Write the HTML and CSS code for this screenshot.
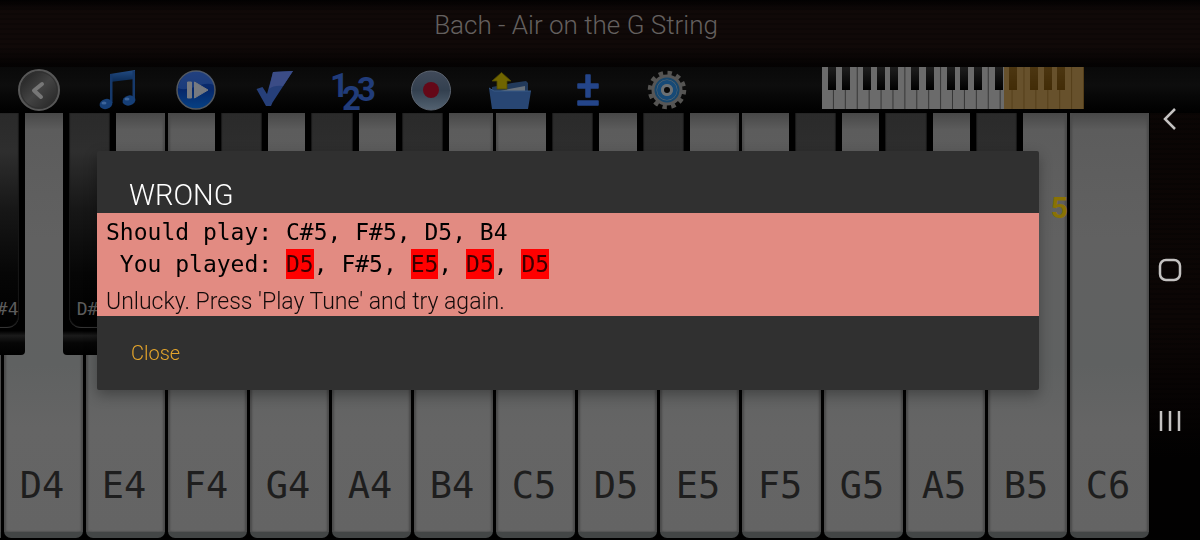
FILE: index.html
```html
<!DOCTYPE html>
<html lang="en">
<head>
<meta charset="utf-8">
<meta name="viewport" content="width=device-width, initial-scale=1">
<title>Bach - Air on the G String</title>
<link rel="stylesheet" href="styles.css">
</head>
<body>
<header class="title-bar"><h1 class="tune">Bach - Air on the G String</h1></header>

<div class="toolbar">
  <div class="tools">
    <button class="tool" aria-label="Back">
      <svg width="44" height="44" viewBox="0 0 44 44">
        <defs><linearGradient id="steel" x1="0" y1="0" x2="1" y2="1"><stop offset="0" stop-color="#1c1c1c"/><stop offset=".5" stop-color="#434343"/><stop offset="1" stop-color="#202020"/></linearGradient></defs>
        <circle cx="22" cy="22" r="20" fill="url(#steel)" stroke="#575757" stroke-width="2"/>
        <circle cx="22" cy="22" r="18" fill="none" stroke="#303030"/>
        <path d="M25 16l-8 6.500 7 6.500" fill="none" stroke="#777" stroke-width="4" stroke-linejoin="round" stroke-linecap="round"/>
      </svg>
    </button>
    <button class="tool" aria-label="Play tune">
      <svg width="44" height="44" viewBox="0 0 44 44">
        <defs><linearGradient id="note" x1="0" y1="0" x2="0" y2="1"><stop offset="0" stop-color="#234c83"/><stop offset="1" stop-color="#0b2a54"/></linearGradient></defs>
        <path d="M14 6l25-4v9l-25 3z" fill="url(#note)"/>
        <path d="M14 6h2.500v29H14zM36.500 3H39v28h-2.500z" fill="#16396b"/>
        <ellipse cx="10" cy="36" rx="6.500" ry="5" transform="rotate(-15 10 36)" fill="#163f77"/>
        <ellipse cx="33" cy="32.500" rx="6.500" ry="5" transform="rotate(-15 33 32.500)" fill="#163f77"/>
        <ellipse cx="8" cy="35" rx="2.500" ry="1.500" fill="#3d659b"/><ellipse cx="31" cy="31" rx="2.500" ry="1.500" fill="#3d659b"/>
      </svg>
    </button>
    <button class="tool" aria-label="Step">
      <svg width="44" height="44" viewBox="0 0 44 44">
        <defs><linearGradient id="blue" x1="0" y1="0" x2="0" y2="1"><stop offset="0" stop-color="#122f70"/><stop offset=".5" stop-color="#06286b"/><stop offset="1" stop-color="#064184"/></linearGradient></defs>
        <circle cx="22" cy="22" r="19" fill="url(#blue)" stroke="#53585f" stroke-width="1.500"/>
        <path d="M4 20C8-2 37-2 40 17 28 12 16 25 4 20z" fill="#42629a" opacity=".35"/>
        <path d="M13.500 14h4v16h-4zM20.500 14v16L34 22z" fill="#777a80" stroke="#777a80" stroke-linejoin="round"/>
      </svg>
    </button>
    <button class="tool" aria-label="Check">
      <svg width="44" height="44" viewBox="0 0 44 44">
        <path d="M3.500 21l6-2 4.500 7L20 4l20-1-20.500 31.500L18 38h-5z" fill="#263f79"/>
        <path d="M20 4l20-1-10 15q-9-1-14 3z" fill="#3b4c86"/>
      </svg>
    </button>
    <button class="tool" aria-label="Note numbers">
      <svg class="digits" width="44" height="44" viewBox="0 0 44 44">
        <text x="-1" y="29">1</text><text x="11" y="42">2</text><text x="26" y="33">3</text>
      </svg>
    </button>
    <button class="tool" aria-label="Record">
      <svg width="44" height="44" viewBox="0 0 44 44">
        <defs><linearGradient id="disc" x1="0" y1="0" x2="0" y2="1"><stop offset="0" stop-color="#414a5a"/><stop offset=".5" stop-color="#33404f"/><stop offset="1" stop-color="#536271"/></linearGradient></defs>
        <circle cx="22" cy="22.500" r="19.500" fill="url(#disc)" stroke="#5c6470"/>
        <circle cx="22" cy="22" r="8" fill="#640818"/>
      </svg>
    </button>
    <button class="tool" aria-label="Open file">
      <svg width="44" height="44" viewBox="0 0 44 44">
        <path d="M24 15l14-2 2 2v20H4V19z" fill="#223a5b"/>
        <path d="M21 21l16-3v6H8z" fill="#68717b"/>
        <path d="M1 20l5 3h37l-3 18H4z" fill="#284673"/>
        <path d="M1 20l5 3h37" fill="none" stroke="#375885"/>
        <path d="M13.500 4.500L23 13h-4v8H9v-8H4z" fill="#706500" stroke="#514900" stroke-width=".8"/>
      </svg>
    </button>
    <button class="tool" aria-label="Transpose">
      <svg width="44" height="44" viewBox="0 0 44 44">
        <path d="M20 7h4v9h8v4h-8v9h-4v-9h-8v-4h8zM12 33h20v4H12z" fill="#24458a" stroke="#24458a" stroke-width="1.500" stroke-linejoin="round"/>
      </svg>
    </button>
    <button class="tool" aria-label="Settings">
      <svg width="44" height="44" viewBox="0 0 44 44">
        <circle cx="22" cy="22" r="17" fill="none" stroke="#555452" stroke-width="4.500" stroke-dasharray="4.400 4.501"/>
        <circle cx="22" cy="22" r="15.500" fill="#565656"/>
        <circle cx="22" cy="22" r="11.500" fill="#5e686f" stroke="#17466c" stroke-width="2"/>
        <circle cx="22" cy="22" r="8" fill="none" stroke="#174a77" stroke-width="4"/>
        <circle cx="22" cy="22" r="6" fill="#6b7074"/>
        <circle cx="22" cy="22" r="3" fill="#080808"/>
      </svg>
    </button>
  </div>
  <svg class="overview" width="262" height="42" viewBox="0 0 262 42" role="img" aria-label="Keyboard range">
    <defs>
      <pattern id="whites" width="11.91" height="42" patternUnits="userSpaceOnUse"><rect width="11.91" height="42" fill="#6b6b6b"/><path d="M11.400 0v42" stroke="#343434"/></pattern>
      <linearGradient id="ebony" x1="0" y1="0" x2="0" y2="1"><stop offset="0" stop-color="#1e1e1e"/><stop offset="1" stop-color="#000"/></linearGradient>
    </defs>
    <rect width="262" height="42" fill="url(#whites)"/>
    <g fill="url(#ebony)"><rect x="6" width="8" height="23"/><rect x="20" width="8" height="23"/><rect x="41" width="8" height="23"/><rect x="55" width="8" height="23"/><rect x="68" width="8" height="23"/><rect x="89" width="8" height="23"/><rect x="104" width="8" height="23"/><rect x="125" width="8" height="23"/><rect x="138" width="8" height="23"/><rect x="152" width="8" height="23"/><rect x="173" width="8" height="23"/><rect x="187" width="8" height="23"/><rect x="208" width="8" height="23"/><rect x="222" width="8" height="23"/><rect x="235" width="8" height="23"/></g>
    <rect x="182" width="80" height="42" fill="#66430a" opacity=".65"/>
  </svg>
</div>

<main class="keyboard">
  <div class="cell sliver"><div class="white"></div><div class="black"><span class="face">C#4</span></div></div>
  <div class="cell"><div class="white">D4</div><div class="black at-d"><span class="face">D#</span></div></div>
  <div class="cell"><div class="white">E4</div></div>
  <div class="cell"><div class="white">F4</div><div class="black at-f"><span class="face"></span></div></div>
  <div class="cell"><div class="white">G4</div><div class="black at-g"><span class="face"></span></div></div>
  <div class="cell"><div class="white">A4</div><div class="black at-a"><span class="face"></span></div></div>
  <div class="cell"><div class="white">B4</div></div>
  <div class="cell"><div class="white">C5</div><div class="black at-c"><span class="face"></span></div></div>
  <div class="cell"><div class="white">D5</div><div class="black at-d"><span class="face"></span></div></div>
  <div class="cell"><div class="white">E5</div></div>
  <div class="cell"><div class="white">F5</div><div class="black at-f"><span class="face"></span></div></div>
  <div class="cell"><div class="white">G5</div><div class="black at-g"><span class="face"></span></div></div>
  <div class="cell"><div class="white">A5</div><div class="black at-a"><span class="face"></span></div></div>
  <div class="cell"><div class="white">B5</div><span class="octave">5</span></div>
  <div class="cell"><div class="white">C6</div></div>
</main>

<div class="overlay">
  <section class="dialog" role="dialog" aria-labelledby="result">
    <h2 class="result" id="result">WRONG</h2>
    <div class="report">
      <p class="notes">Should play: C#5, F#5, D5, B4</p>
      <p class="notes"> You played: <mark>D5</mark>, F#5, <mark>E5</mark>, <mark>D5</mark>, <mark>D5</mark></p>
      <p class="hint">Unlucky. Press 'Play Tune' and try again.</p>
    </div>
    <button class="close">Close</button>
  </section>
</div>

<nav class="system" aria-label="System">
  <button aria-label="Back"><svg width="24" height="24" viewBox="0 0 24 24"><path d="M17 2L7 12l10 10"/></svg></button>
  <button aria-label="Home"><svg width="24" height="24" viewBox="0 0 24 24"><rect x="2" y="2" width="20" height="20" rx="6"/></svg></button>
  <button aria-label="Recent apps"><svg width="24" height="24" viewBox="0 0 24 24"><path d="M3 2v20M12 2v20M21 2v20"/></svg></button>
</nav>
</body>
</html>
```

FILE: styles.css
```css
* { box-sizing: border-box; }

body {
  margin: 0;
  min-height: 100vh;
  display: flex;
  flex-direction: column;
  overflow: hidden;
  font-family: Roboto, "Open Sans", sans-serif;
  font-weight: 300;
  background:
    repeating-linear-gradient(180deg, #0000 0 3px, #00000040 3px 5px),
    linear-gradient(180deg, #0a0504 0, #0c0605 60%, #020101 85%, #020101 100%);
}

h1, h2, p { margin: 0; font-weight: 300; }

button {
  border: 0;
  padding: 0;
  background: none;
  font: inherit;
  color: inherit;
}

svg { display: block; }

.title-bar {
  height: 67px;
  padding: 10px 48px 0 0;
  text-align: center;
  background:
    repeating-linear-gradient(180deg, #0000 0 3px, #00000030 3px 5px),
    linear-gradient(180deg, #020101 0, #100908 16%, #100908 70%, #040202 100%);
}

.tune {
  font-size: 26px;
  line-height: 30px;
  color: #64605f;
}

.toolbar {
  height: 46px;
  display: flex;
  justify-content: space-between;
  padding-right: 116px;
  background: linear-gradient(180deg, #090909 0, #0d0d0d 40%, #080808 60%, #030303 85%, #000 100%);
}

.tools {
  flex: 0 1 706px;
  display: grid;
  grid-template-columns: repeat(9, 1fr);
}

.tool {
  display: flex;
  justify-content: center;
  align-items: center;
}

.digits { overflow: visible; }

.digits text {
  font: bold 33px Roboto, sans-serif;
  fill: #213c7a;
}

.keyboard {
  flex: 1;
  display: flex;
  margin-right: 50px;
  padding-bottom: 2px;
  background: #000;
  overflow: hidden;
}

.cell {
  flex: 1;
  position: relative;
  display: flex;
}

.sliver { flex: 0 0 2px; }

.white {
  flex: 1;
  display: flex;
  align-items: flex-end;
  justify-content: center;
  margin: 0 1px 0 2px;
  padding: 0 3px 24px 0;
  border-radius: 0 0 7px 7px;
  border-bottom: 6px solid #434646;
  background: linear-gradient(180deg, #484848 0, #5c5c5c 4%, #616161 30%, #5f6161 60%, #656565 75%, #646464 100%);
  box-shadow: inset 2px 0 2px #4b4b4b, inset -2px 0 2px #4b4b4b;
  font: 37px/44px "DejaVu Sans Mono", monospace;
  color: #1e1e1e;
}

.sliver .white {
  margin: 0 1px 0 0;
  padding: 0;
}

.black {
  position: absolute;
  z-index: 1;
  top: 0;
  width: 65%;
  height: 57%;
  padding: 0 6px 27px;
  border-radius: 0 0 4px 4px;
  background: linear-gradient(180deg, #000 90%, #1b1b1b 92%, #060606 95%, #000 100%);
  display: flex;
}

.sliver .black { left: -28px; width: 53px; }
.at-c { left: 63%; }
.at-d { left: 74%; }
.at-f { left: 60%; }
.at-g { left: 70%; }
.at-a { left: 80%; }

.face {
  flex: 1;
  display: flex;
  align-items: flex-end;
  padding: 0 0 8px 8px;
  border-radius: 0 0 12px 12px;
  border-bottom: 1px solid #333;
  box-shadow: inset 1px 0 1px #181818, inset -1px 0 1px #181818;
  background: linear-gradient(180deg, #2a2a2a 0, #2e2e2e 18%, #171717 45%, #060606 75%, #000 100%);
  font: 18px/20px "DejaVu Sans Mono", monospace;
  color: #5c5c5c;
}

.octave {
  position: absolute;
  top: 77px;
  right: 0;
  font-size: 30px;
  line-height: 35px;
  font-weight: 700;
  color: #8a7204;
}

.overlay {
  position: fixed;
  z-index: 2;
  inset: 0 64px 0 0;
  display: flex;
  align-items: center;
  padding: 0 97px;
}

.dialog {
  flex: 1;
  background: #303030;
  border-radius: 2px;
  box-shadow: 0 5px 14px #00000050;
}

.result {
  padding: 26px 32px 0;
  font-size: 29px;
  line-height: 36px;
  color: #fff;
}

.report {
  padding: 3px 9px 0;
  background: #e28b82;
  color: #120a0a;
}

.notes {
  white-space: pre;
  font: 23px/32px "DejaVu Sans Mono", monospace;
  color: #000;
}

.notes mark {
  padding: 2px 0;
  background: #f00;
  color: #3a0000;
}

.hint {
  padding-top: 8px;
  font-size: 23px;
  line-height: 28px;
}

.close {
  margin: 24px 34px;
  font-size: 20px;
  line-height: 26px;
  color: #e5a52b;
}

.system {
  position: fixed;
  z-index: 3;
  inset: 0 0 0 auto;
  width: 60px;
  padding: 43px 0;
  display: flex;
  flex-direction: column;
}

.system button {
  flex: 1;
  display: flex;
  align-items: center;
  justify-content: center;
}

.system svg {
  fill: none;
  stroke: #c4c2c1;
  stroke-width: 2.5;
}
```
